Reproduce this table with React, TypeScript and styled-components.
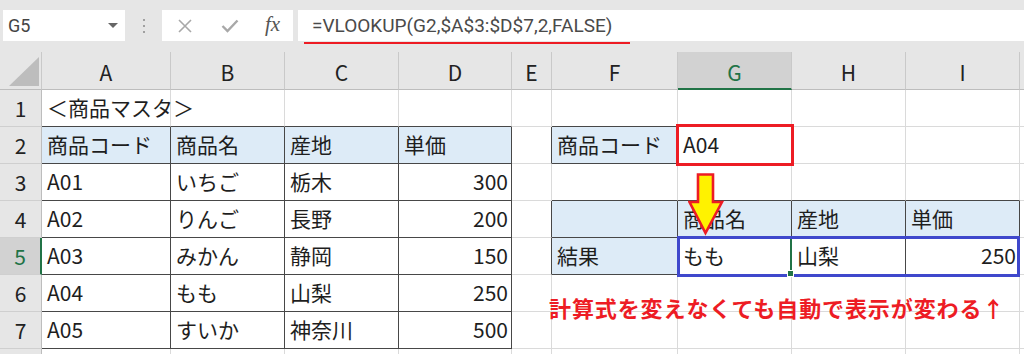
import React from 'react'
import styled, { createGlobalStyle } from 'styled-components'

const GlobalStyle = createGlobalStyle`
  html, body {
    margin: 0;
    padding: 0;
    background: #ffffff;
    overflow: hidden;
  }
`

const RED = '#ed1c24'
const BLUE = '#3f48cc'
const GREEN = '#217346'
const GRID = '#dadada'
const DARK = '#474747'
const FILL = '#ddebf7'
const JP = `"Noto Sans CJK JP", "Noto Sans", sans-serif`

const Frame = styled.div`
  width: 1024px;
  height: 354px;
  overflow: hidden;
  background: #ffffff;
  display: flex;
  flex-direction: column;
`

// ---- formula bar ----
const Toolbar = styled.div`
  height: 52px;
  flex: none;
  background: #e6e6e6;
  display: flex;
  align-items: flex-start;
  padding: 10px 0 0 3px;
  box-sizing: border-box;
`

const NameBox = styled.div`
  width: 122px;
  height: 31px;
  background: #ffffff;
  display: flex;
  align-items: center;
  justify-content: space-between;
  padding: 0 7px 0 5px;
  box-sizing: border-box;
  font-family: Roboto, sans-serif;
  font-size: 18px;
  color: #444;
`

const Caret = styled.span`
  width: 0;
  height: 0;
  border-left: 5px solid transparent;
  border-right: 5px solid transparent;
  border-top: 5px solid #666;
`

const Grip = styled.div`
  width: 37px;
  height: 31px;
  display: flex;
  flex-direction: column;
  align-items: center;
  justify-content: center;
  gap: 4px;
  span {
    width: 2px;
    height: 2px;
    background: #a0a0a0;
  }
`

const FxButtons = styled.div`
  width: 131px;
  height: 31px;
  background: #ffffff;
  display: flex;
  align-items: center;
  padding-left: 15px;
  box-sizing: border-box;
`

const IconSlot = styled.div<{ $w: number }>`
  width: ${({ $w }) => $w}px;
  display: flex;
  align-items: center;
`

const Fx = styled.span`
  font-family: "Liberation Serif", serif;
  font-style: italic;
  font-size: 21px;
  color: #555;
  line-height: 1;
  margin-top: -3px;
`

const FormulaBox = styled.div`
  flex: 1;
  height: 31px;
  margin-left: 5px;
  background: #ffffff;
  display: flex;
  align-items: center;
  padding-left: 14px;
`

const Formula = styled.span`
  position: relative;
  font-family: Roboto, sans-serif;
  font-size: 19px;
  color: #4a4a4a;
  white-space: nowrap;
  &::after {
    content: '';
    position: absolute;
    left: -8px;
    right: -18px;
    bottom: -7px;
    height: 2px;
    background: ${RED};
  }
`

// ---- sheet ----
const Sheet = styled.div`
  display: grid;
  grid-template-columns: 42px 129px 114px 114px 113px 40px 126px 114px 114px 114px 1fr;
  grid-template-rows: 38px;
  grid-auto-rows: 37px;
  font-family: ${JP};
`

const HeadCell = styled.div<{ $active?: boolean }>`
  background: ${({ $active }) => ($active ? '#d2d2d2' : '#e6e6e6')};
  color: ${({ $active }) => ($active ? GREEN : '#222')};
  border-right: 1px solid #c9c9c9;
  border-bottom: ${({ $active }) => ($active ? `2px solid ${GREEN}` : '1px solid #bdbdbd')};
  box-sizing: border-box;
  display: flex;
  align-items: center;
  justify-content: center;
  font-size: 21px;
  padding-top: 3px;
`

const Corner = styled.div`
  background: #e6e6e6;
  border-right: 1px solid #c9c9c9;
  border-bottom: 1px solid #bdbdbd;
  box-sizing: border-box;
  display: flex;
  align-items: flex-end;
  justify-content: flex-end;
  padding: 0 2px 3px 0;
  svg {
    display: block;
  }
`

const RowHead = styled.div<{ $active?: boolean }>`
  background: ${({ $active }) => ($active ? '#d2d2d2' : '#e6e6e6')};
  color: ${({ $active }) => ($active ? GREEN : '#222')};
  border-bottom: 1px solid #cfcfcf;
  border-right: ${({ $active }) => ($active ? `2px solid ${GREEN}` : '1px solid #bdbdbd')};
  box-sizing: border-box;
  display: flex;
  align-items: center;
  justify-content: center;
  font-size: 21px;
`

const Cell = styled.div<{ $fill?: boolean; $right?: boolean; $rb: string; $bb: string }>`
  position: relative;
  background: ${({ $fill }) => ($fill ? FILL : '#ffffff')};
  border-right: 1px solid ${({ $rb }) => $rb};
  border-bottom: 1px solid ${({ $bb }) => $bb};
  box-sizing: border-box;
  display: flex;
  align-items: center;
  justify-content: ${({ $right }) => ($right ? 'flex-end' : 'flex-start')};
  padding: 0 3px 2px 5px;
  font-size: 21px;
  color: #1e1e1e;
  white-space: nowrap;
`

const Text = styled.span`
  position: relative;
  z-index: 1;
`

// overlays drawn by the annotator
const RedBox = styled.div`
  position: absolute;
  left: -2px;
  top: -3px;
  width: 118px;
  height: 42px;
  border: 3px solid ${RED};
  box-sizing: border-box;
  z-index: 3;
`

const BlueBox = styled.div`
  position: absolute;
  left: -1px;
  top: -2px;
  width: 343px;
  height: 41px;
  border: 3px solid ${BLUE};
  box-sizing: border-box;
  z-index: 3;
`

const FillHandle = styled.div`
  position: absolute;
  right: -3px;
  bottom: -3px;
  width: 5px;
  height: 5px;
  background: ${GREEN};
  border: 1px solid #ffffff;
  z-index: 4;
`

const SelEdge = styled.div`
  position: absolute;
  right: -1px;
  top: 0;
  bottom: 0;
  width: 2px;
  background: ${GREEN};
  z-index: 2;
`

const Arrow = styled.svg`
  position: absolute;
  left: 10px;
  top: 9px;
  z-index: 5;
`

const Note = styled.div`
  position: absolute;
  left: -3px;
  top: 19px;
  font-family: ${JP};
  font-weight: 700;
  font-size: 22px;
  letter-spacing: 0.9px;
  line-height: 26px;
  color: ${RED};
  white-space: nowrap;
  z-index: 5;
`

const COLS = ['A', 'B', 'C', 'D', 'E', 'F', 'G', 'H', 'I']

type CellData = { t?: string; right?: boolean }

const rows: CellData[][] = [
  [{ t: '＜商品マスタ＞' }],
  [{ t: '商品コード' }, { t: '商品名' }, { t: '産地' }, { t: '単価' }, {}, { t: '商品コード' }, { t: 'A04' }],
  [{ t: 'A01' }, { t: 'いちご' }, { t: '栃木' }, { t: '300', right: true }],
  [{ t: 'A02' }, { t: 'りんご' }, { t: '長野' }, { t: '200', right: true }, {}, {}, { t: '商品名' }, { t: '産地' }, { t: '単価' }],
  [{ t: 'A03' }, { t: 'みかん' }, { t: '静岡' }, { t: '150', right: true }, {}, { t: '結果' }, { t: 'もも' }, { t: '山梨' }, { t: '250', right: true }],
  [{ t: 'A04' }, { t: 'もも' }, { t: '山梨' }, { t: '250', right: true }],
  [{ t: 'A05' }, { t: 'すいか' }, { t: '神奈川' }, { t: '500', right: true }],
  [],
]

// row numbers are 1-based, columns 0 = A
const boxed = (r: number, c: number) =>
  (r >= 2 && r <= 7 && c >= 0 && c <= 3) || (r === 2 && c === 5) || (r >= 4 && r <= 5 && c >= 5 && c <= 8)

const filled = (r: number, c: number) =>
  (r === 2 && c <= 3) || (r === 2 && c === 5) || (r === 4 && c >= 5 && c <= 8) || (r === 5 && c === 5)

const XIcon = () => (
  <svg width="16" height="14" viewBox="0 0 16 14">
    <path d="M2 1 L14 13 M14 1 L2 13" stroke="#a8a8a8" strokeWidth="1.6" fill="none" />
  </svg>
)

const CheckIcon = () => (
  <svg width="18" height="14" viewBox="0 0 18 14">
    <path d="M1.5 7 L6.5 12 L16.5 1.5" stroke="#a8a8a8" strokeWidth="2.4" fill="none" />
  </svg>
)

const App = () => {
  return (
    <Frame>
      <GlobalStyle />
      <Toolbar>
        <NameBox>
          G5
          <Caret />
        </NameBox>
        <Grip>
          <span />
          <span />
          <span />
        </Grip>
        <FxButtons>
          <IconSlot $w={44}>
            <XIcon />
          </IconSlot>
          <IconSlot $w={44}>
            <CheckIcon />
          </IconSlot>
          <IconSlot $w={24}>
            <Fx>fx</Fx>
          </IconSlot>
        </FxButtons>
        <FormulaBox>
          <Formula>=VLOOKUP(G2,$A$3:$D$7,2,FALSE)</Formula>
        </FormulaBox>
      </Toolbar>

      <Sheet>
        <Corner>
          <svg width="30" height="29" viewBox="0 0 30 29">
            <polygon points="30,0 30,29 0,29" fill="#bdbdbd" />
          </svg>
        </Corner>
        {COLS.map((c) => (
          <HeadCell key={c} $active={c === 'G'}>
            {c}
          </HeadCell>
        ))}
        <HeadCell />

        {rows.map((row, i) => {
          const r = i + 1
          return (
            <React.Fragment key={r}>
              <RowHead $active={r === 5}>{r < 8 ? r : ''}</RowHead>
              {COLS.map((_, c) => {
                const d = row[c] || {}
                const rb = boxed(r, c) || boxed(r, c + 1) ? DARK : GRID
                const bb = boxed(r, c) || boxed(r + 1, c) ? DARK : GRID
                return (
                  <Cell key={c} $fill={filled(r, c)} $right={d.right} $rb={rb} $bb={bb}>
                    {d.t && <Text>{d.t}</Text>}
                    {r === 2 && c === 6 && <RedBox />}
                    {r === 3 && c === 6 && (
                      <Arrow width="36" height="63" viewBox="0 0 36 63">
                        <path
                          d="M10 1.5 H25 V29 H34 L17.5 60 L1.5 29 H10 Z"
                          fill="#fff200"
                          stroke={RED}
                          strokeWidth="2.6"
                          strokeLinejoin="miter"
                        />
                      </Arrow>
                    )}
                    {r === 5 && c === 6 && (
                      <>
                        <SelEdge />
                        <FillHandle />
                        <BlueBox />
                      </>
                    )}
                    {r === 6 && c === 5 && <Note>計算式を変えなくても自動で表示が変わる↑</Note>}
                  </Cell>
                )
              })}
              <Cell $rb={GRID} $bb={GRID} />
            </React.Fragment>
          )
        })}
      </Sheet>
    </Frame>
  )
}

export default App
